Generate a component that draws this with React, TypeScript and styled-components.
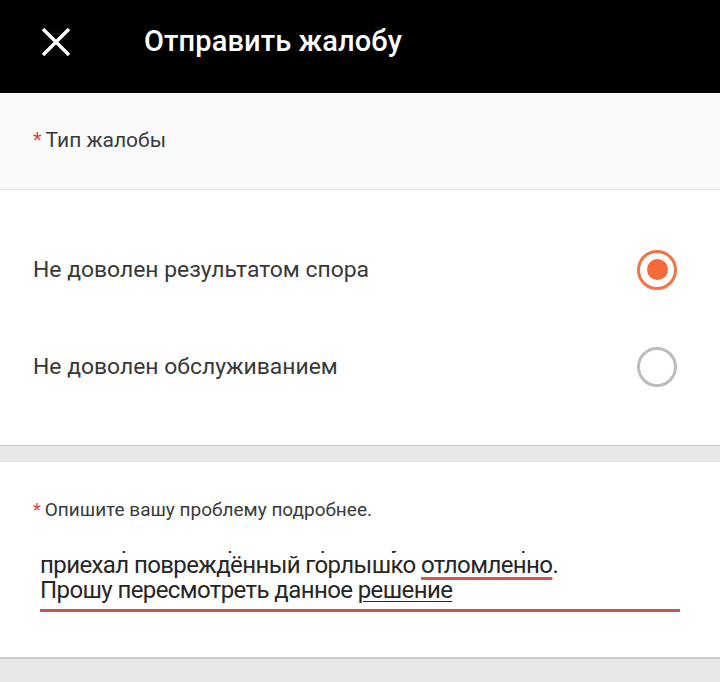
import React from "react";
import styled, { createGlobalStyle } from "styled-components";

const Global = createGlobalStyle`
  html, body { margin: 0; padding: 0; background: #e8e8e8; }
  body { font-family: Roboto, "Noto Sans", sans-serif; -webkit-font-smoothing: antialiased; }
  * { box-sizing: border-box; }
`;

const Page = styled.div`
  width: 720px;
  height: 682px;
  display: flex;
  flex-direction: column;
  background: #e8e8e8;
  overflow: hidden;
`;

const Header = styled.header`
  height: 93px;
  background: #000;
  display: flex;
  align-items: center;
  padding: 0 0 12px 40px;
  flex-shrink: 0;
`;

const CloseButton = styled.button`
  width: 32px;
  height: 32px;
  padding: 0;
  border: 0;
  background: none;
  display: flex;
  align-items: center;
  justify-content: center;
  margin-right: 72px;
  margin-top: 2px;
`;

const Title = styled.h1`
  margin: 0;
  color: #fff;
  font-size: 29px;
  font-weight: 500;
  letter-spacing: 0.1px;
`;

const TypeSection = styled.div`
  height: 97px;
  background: #fafafa;
  border-bottom: 1px solid #e4e4e4;
  display: flex;
  align-items: center;
  padding: 0 33px 2px;
  flex-shrink: 0;
`;

const Label = styled.div<{ $size: number }>`
  font-size: ${(p) => p.$size}px;
  line-height: 22px;
  color: #3a3a3a;
  display: flex;
  align-items: baseline;
`;

const Star = styled.span`
  color: #d9473f;
  margin-right: 4px;
  font-size: 0.95em;
`;

const Options = styled.div`
  background: #fff;
  padding: 31px 0 30px;
  border-bottom: 1px solid #c9c9c9;
  flex-shrink: 0;
`;

const OptionRow = styled.div`
  height: 97px;
  display: flex;
  align-items: center;
  justify-content: space-between;
  padding: 0 43px 0 33px;
  font-size: 22.9px;
  color: #383838;
`;

const Radio = styled.span<{ $on: boolean }>`
  width: 40px;
  height: 40px;
  border-radius: 50%;
  border: 3.5px solid ${(p) => (p.$on ? "#f07447" : "#bdbdbd")};
  display: flex;
  align-items: center;
  justify-content: center;
  &::after {
    content: "";
    display: ${(p) => (p.$on ? "block" : "none")};
    width: 21px;
    height: 21px;
    border-radius: 50%;
    background: #f5693a;
  }
`;

const Gap = styled.div`
  height: 16px;
  flex-shrink: 0;
`;

const DescSection = styled.div`
  background: #fff;
  height: 197px;
  border-bottom: 2px solid #cbcbcb;
  padding: 37px 40px 0 33px;
  flex-shrink: 0;
  display: flex;
  flex-direction: column;
`;

const Field = styled.div`
  margin-top: 30px;
  margin-left: 7px;
  border-bottom: 3px solid #c9554c;
  padding-bottom: 6px;
`;

const Scroll = styled.div`
  height: 52px;
  overflow: hidden;
  display: flex;
  flex-direction: column;
  justify-content: flex-end;
  font-size: 24px;
  line-height: 25px;
  color: #262626;
  letter-spacing: -0.6px;
`;

const Line = styled.div`
  white-space: nowrap;
`;

const Spell = styled.span`
  text-decoration: underline;
  text-decoration-color: #d9534c;
  text-decoration-thickness: 3px;
  text-underline-offset: 4px;
`;

const Compose = styled.span`
  text-decoration: underline;
  text-decoration-thickness: 1px;
  text-underline-offset: 3px;
`;

export default function App() {
  return (
    <Page>
      <Global />
      <Header>
        <CloseButton aria-label="close">
          <svg width="30" height="30" viewBox="0 0 30 30">
            <path d="M2 2 L28 28 M28 2 L2 28" stroke="#fff" strokeWidth="3.4" strokeLinecap="butt" />
          </svg>
        </CloseButton>
        <Title>Отправить жалобу</Title>
      </Header>
      <TypeSection>
        <Label $size={21}>
          <Star>*</Star>Тип жалобы
        </Label>
      </TypeSection>
      <Options>
        <OptionRow>
          Не доволен результатом спора
          <Radio $on={true} />
        </OptionRow>
        <OptionRow>
          Не доволен обслуживанием
          <Radio $on={false} />
        </OptionRow>
      </Options>
      <Gap />
      <DescSection>
        <Label $size={19}>
          <Star>*</Star>Опишите вашу проблему подробнее.
        </Label>
        <Field>
          <Scroll>
            <Line>Заказ пришёл в срок, но при получении товар</Line>
            <Line>
              приехал повреждённый горлышко <Spell>отломленно</Spell>.
            </Line>
            <Line>
              Прошу пересмотреть данное <Compose>решение</Compose>
            </Line>
          </Scroll>
        </Field>
      </DescSection>
    </Page>
  );
}
